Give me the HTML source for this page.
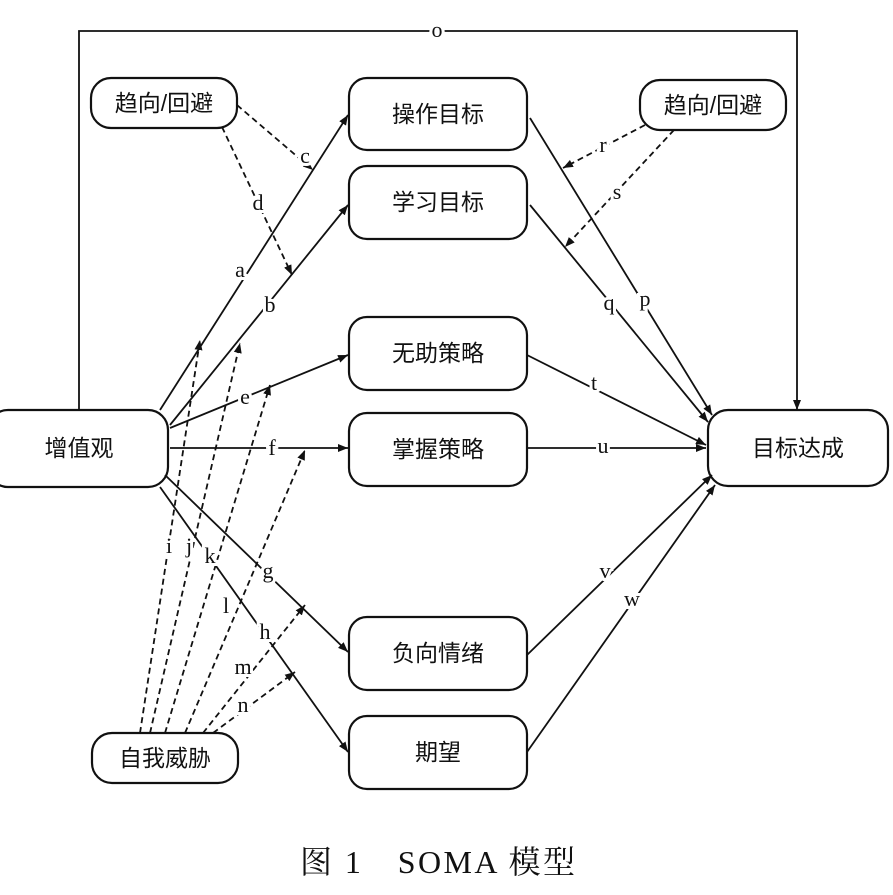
<!DOCTYPE html>
<html><head><meta charset="utf-8"><style>
html,body{margin:0;padding:0;background:#fff;}
svg{display:block;}
.b{font-family:"Liberation Sans","Noto Sans CJK SC",sans-serif;font-size:23px;fill:#111;}
.l{font-family:"Liberation Serif",serif;font-size:22px;fill:#111;}
</style></head><body>
<svg width="893" height="895" viewBox="0 0 893 895" xmlns="http://www.w3.org/2000/svg">
<defs><marker id="ar" viewBox="0 0 10 10" refX="10" refY="5" markerWidth="10" markerHeight="10" markerUnits="userSpaceOnUse" orient="auto"><path d="M0,1 L10,5 L0,9 z" fill="#111"/></marker></defs>
<g fill="none" stroke="#111" stroke-width="2.2">
<rect x="-12" y="410" width="180" height="77" rx="20"/>
<rect x="91" y="78" width="146" height="50" rx="20"/>
<rect x="349" y="78" width="178" height="72" rx="18"/>
<rect x="349" y="166" width="178" height="73" rx="18"/>
<rect x="349" y="317" width="178" height="73" rx="18"/>
<rect x="349" y="413" width="178" height="73" rx="18"/>
<rect x="349" y="617" width="178" height="73" rx="18"/>
<rect x="349" y="716" width="178" height="73" rx="18"/>
<rect x="640" y="80" width="146" height="50" rx="20"/>
<rect x="708" y="410" width="180" height="76" rx="20"/>
<rect x="92" y="733" width="146" height="50" rx="20"/>
</g>
<g stroke="#111" stroke-width="1.8" fill="none" marker-end="url(#ar)">
<path d="M79,410 V31 H797 V410"/>
<path d="M160,410 L348,115"/>
<path d="M170,425 L348,205"/>
<path d="M170,428 L348,355"/>
<path d="M170,448 L348,448"/>
<path d="M165,475 L348,652"/>
<path d="M160,487 L348,752"/>
<path d="M530,118 L712,415"/>
<path d="M530,205 L708,422"/>
<path d="M527,355 L706,445"/>
<path d="M527,448 L706,448"/>
<path d="M527,655 L712,475"/>
<path d="M527,752 L715,485"/>
</g>
<g stroke="#111" stroke-width="1.8" fill="none" stroke-dasharray="6,4" marker-end="url(#ar)">
<path d="M237,105 L313,170"/>
<path d="M222,127 L292,275"/>
<path d="M645,125 L563,168"/>
<path d="M674,130 L565,247"/>
<path d="M140,733 L200,340"/>
<path d="M150,733 L240,343"/>
<path d="M165,733 L270,385"/>
<path d="M185,733 L305,450"/>
<path d="M203,733 L305,605"/>
<path d="M213,733 L295,672"/>
</g>
<g class="l" text-anchor="middle" stroke="#fff" stroke-width="6" paint-order="stroke">
<text x="437" y="37">o</text>
<text x="305" y="163">c</text>
<text x="258" y="210">d</text>
<text x="240" y="277">a</text>
<text x="270" y="312">b</text>
<text x="245" y="404">e</text>
<text x="272" y="455">f</text>
<text x="268" y="578">g</text>
<text x="265" y="639">h</text>
<text x="169" y="553">i</text>
<text x="189" y="553">j</text>
<text x="210" y="563">k</text>
<text x="226" y="613">l</text>
<text x="243" y="674">m</text>
<text x="243" y="712">n</text>
<text x="603" y="152">r</text>
<text x="617" y="199">s</text>
<text x="609" y="310">q</text>
<text x="645" y="306">p</text>
<text x="594" y="390">t</text>
<text x="603" y="453">u</text>
<text x="605" y="578">v</text>
<text x="632" y="606">w</text>
</g>
<g class="b" text-anchor="middle">
<text x="79" y="456">增值观</text>
<text x="164" y="111">趋向/回避</text>
<text x="438" y="122">操作目标</text>
<text x="438" y="210">学习目标</text>
<text x="438" y="361">无助策略</text>
<text x="438" y="457">掌握策略</text>
<text x="438" y="661">负向情绪</text>
<text x="438" y="760">期望</text>
<text x="713" y="113">趋向/回避</text>
<text x="798" y="456">目标达成</text>
<text x="165" y="766">自我威胁</text>
</g>
<text x="300" y="873" font-family="'Liberation Serif','Noto Serif CJK SC',serif" font-size="32" fill="#111" textLength="275" lengthAdjust="spacing">图 1　SOMA 模型</text>
</svg>
</body></html>
